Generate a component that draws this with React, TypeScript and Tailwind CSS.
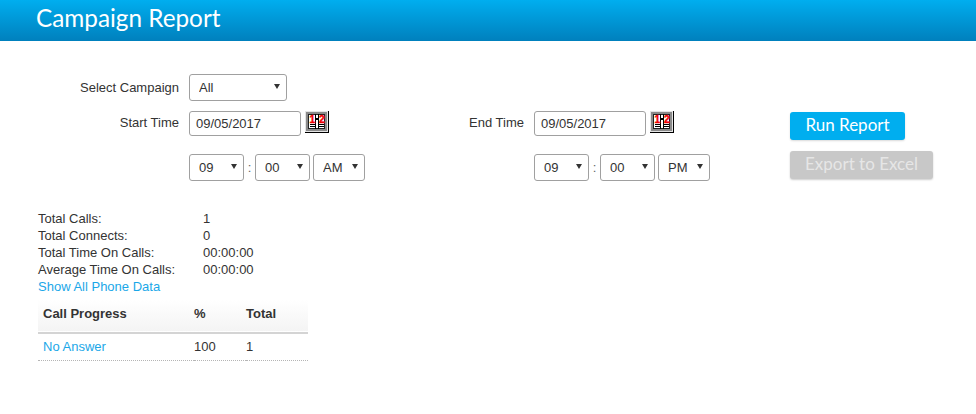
const font = "font-['Liberation_Sans',Arial,sans-serif]";

const CalendarIcon = () => (
  <svg width="24" height="22" viewBox="0 0 24 22" className="shrink-0">
    <g shapeRendering="crispEdges">
      <rect x="0" y="0" width="24" height="22" fill="#000" />
      <rect x="0" y="0" width="23" height="21" fill="#e4e4e4" />
      <rect x="1" y="1" width="21" height="19" fill="#8a8a8a" />
      <rect x="3" y="3" width="17" height="15" fill="#fff" />
      <rect x="3" y="3" width="17" height="1" fill="#222" />
      <rect x="3" y="3" width="1" height="15" fill="#222" />
      <rect x="3" y="17" width="17" height="1" fill="#222" />
      <rect x="19" y="3" width="1" height="15" fill="#222" />
      <rect x="10" y="3" width="1" height="15" fill="#000" />
      <rect x="13" y="3" width="1" height="15" fill="#000" />
      <rect x="11" y="7" width="2" height="2" fill="#000" />
      <rect x="5" y="13" width="5" height="1" fill="#000" />
      <rect x="14" y="13" width="5" height="1" fill="#000" />
      <rect x="5" y="15" width="5" height="1" fill="#000" />
      <rect x="14" y="15" width="5" height="1" fill="#000" />
    </g>
    <text x="4.5" y="11.5" fontSize="10" fontWeight="700" fill="#f00000" stroke="#f00000" strokeWidth="0.4" fontFamily="Liberation Sans">1</text>
    <text x="14" y="11.5" fontSize="10" fontWeight="700" fill="#f00000" stroke="#f00000" strokeWidth="0.4" fontFamily="Liberation Sans">2</text>
  </svg>
);

const Select = ({ value, width, pad }: { value: string; width: string; pad: string }) => (
  <div className={`relative ${width} h-[27px]`}>
    <select
      defaultValue={value}
      className={`appearance-none w-full h-full border border-[#a0a0a0] rounded-[3px] bg-white text-[13px] text-[#333] ${pad} ${font}`}
    >
      <option>{value}</option>
    </select>
    <svg width="6" height="5" viewBox="0 0 6 5" className="absolute right-[7px] top-[10px] pointer-events-none">
      <path d="M0 0h6L3 5z" fill="#333" />
    </svg>
  </div>
);

const DateField = () => (
  <div className="flex items-start gap-[4px]">
    <input
      defaultValue="09/05/2017"
      className={`w-[112px] h-[25px] border border-[#a0a0a0] rounded-[3px] px-[6px] text-[13px] text-[#333] ${font}`}
    />
    <CalendarIcon />
  </div>
);

const TimeRow = ({ ampm }: { ampm: string }) => (
  <div className="flex items-center">
    <Select value="09" width="w-[55px]" pad="pl-[9px]" />
    <span className="w-[11px] text-center text-[13px] text-[#666]">:</span>
    <Select value="00" width="w-[55px]" pad="pl-[9px]" />
    <div className="w-[3px]" />
    <Select value={ampm} width="w-[52px]" pad="pl-[9px]" />
  </div>
);

const stats = [
  ["Total Calls:", "1"],
  ["Total Connects:", "0"],
  ["Total Time On Calls:", "00:00:00"],
  ["Average Time On Calls:", "00:00:00"],
];

export default function App() {
  return (
    <div className={`min-h-[414px] bg-white text-[#333] text-[13px] ${font}`}>
      <header className="h-[41px] bg-gradient-to-b from-[#00aeef] to-[#0080bd] pl-[36px]">
        <h1 className="font-['Lato',sans-serif] text-[24.3px] leading-[36px] text-white">Campaign Report</h1>
      </header>

      <div className="flex pt-[33px]">
        <div className="w-[534px] pl-[189px] relative">
          <div className="flex items-center h-[27px] gap-[10px] -ml-[189px]">
            <label className="w-[179px] text-right">Select Campaign</label>
            <Select value="All" width="w-[98px]" pad="pl-[9px]" />
          </div>
          <div className="flex items-start mt-[10px] gap-[10px] -ml-[189px]">
            <label className="w-[179px] text-right leading-[23px]">Start Time</label>
            <DateField />
          </div>
          <div className="mt-[18px]">
            <TimeRow ampm="AM" />
          </div>
        </div>

        <div className="w-[256px] pt-[37px]">
          <div className="flex items-start -ml-[65px] gap-[10px]">
            <label className="w-[55px] text-right leading-[23px]">End Time</label>
            <DateField />
          </div>
          <div className="mt-[18px]">
            <TimeRow ampm="PM" />
          </div>
        </div>

        <div className="pt-[38px] font-['Lato',sans-serif]">
          <button className="block w-[115px] h-[28px] pb-[2px] rounded-[3px] bg-[#00aeef] text-white text-[17px] shadow-[0_1px_2px_rgba(0,0,0,0.15)]">
            Run Report
          </button>
          <button className="block w-[143px] h-[28px] pb-[2px] mt-[11px] rounded-[3px] bg-[#c8c8c8] text-[#e6e6e6] text-[17px] shadow-[0_1px_2px_rgba(0,0,0,0.2)]">
            Export to Excel
          </button>
        </div>
      </div>

      <div className="pl-[38px] pt-[29px] w-[308px] box-content">
        {stats.map(([label, value]) => (
          <div key={label} className="flex h-[17px] leading-[17px]">
            <span className="w-[165px]">{label}</span>
            <span>{value}</span>
          </div>
        ))}
        <a className="block h-[17px] leading-[17px] text-[#1aa7e8]">Show All Phone Data</a>
        <table className="w-[270px] mt-[5px] border-collapse text-left">
          <thead>
            <tr className="h-[33px] bg-gradient-to-b from-white to-[#f4f4f4] border-b-2 border-[#d4d4d4]">
              <th className="w-[156px] pl-[5px] pb-[4px] font-bold text-[13px]">Call Progress</th>
              <th className="w-[52px] pb-[4px] font-bold text-[13px]">%</th>
              <th className="pb-[4px] font-bold text-[13px]">Total</th>
            </tr>
          </thead>
          <tbody>
            <tr className="h-[27px] border-b border-dotted border-[#b5b5b5]">
              <td className="pl-[5px] text-[#1aa7e8]">No Answer</td>
              <td>100</td>
              <td>1</td>
            </tr>
          </tbody>
        </table>
      </div>
    </div>
  );
}
